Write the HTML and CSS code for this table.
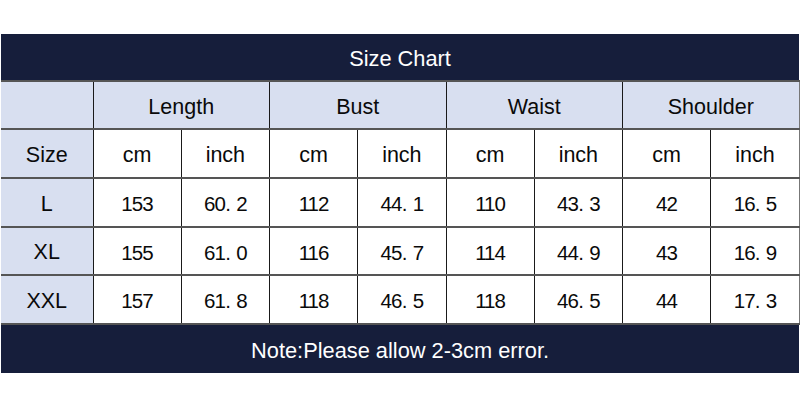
FILE: index.html
```html
<!DOCTYPE html>
<html lang="en">
<head>
<meta charset="utf-8">
<title>Size Chart</title>
<link rel="stylesheet" href="styles.css">
</head>
<body>
<div class="chart">
  <table class="size-table">
    <colgroup>
      <col class="col-size">
      <col span="8" class="col-val">
    </colgroup>
    <tr class="row-title"><td colspan="9">Size Chart</td></tr>
    <tr class="row-group">
      <td class="label"></td>
      <td colspan="2">Length</td>
      <td colspan="2">Bust</td>
      <td colspan="2">Waist</td>
      <td colspan="2">Shoulder</td>
    </tr>
    <tr class="row-unit">
      <td class="label">Size</td>
      <td>cm</td><td>inch</td>
      <td>cm</td><td>inch</td>
      <td>cm</td><td>inch</td>
      <td>cm</td><td>inch</td>
    </tr>
    <tr class="row-data">
      <td class="label">L</td>
      <td class="num">153</td><td class="num">60<span class="dp">.</span>2</td>
      <td class="num">112</td><td class="num">44<span class="dp">.</span>1</td>
      <td class="num">110</td><td class="num">43<span class="dp">.</span>3</td>
      <td class="num">42</td><td class="num">16<span class="dp">.</span>5</td>
    </tr>
    <tr class="row-data">
      <td class="label">XL</td>
      <td class="num">155</td><td class="num">61<span class="dp">.</span>0</td>
      <td class="num">116</td><td class="num">45<span class="dp">.</span>7</td>
      <td class="num">114</td><td class="num">44<span class="dp">.</span>9</td>
      <td class="num">43</td><td class="num">16<span class="dp">.</span>9</td>
    </tr>
    <tr class="row-data">
      <td class="label">XXL</td>
      <td class="num">157</td><td class="num">61<span class="dp">.</span>8</td>
      <td class="num">118</td><td class="num">46<span class="dp">.</span>5</td>
      <td class="num">118</td><td class="num">46<span class="dp">.</span>5</td>
      <td class="num">44</td><td class="num">17<span class="dp">.</span>3</td>
    </tr>
    <tr class="row-note"><td colspan="9">Note:Please allow 2-3cm error.</td></tr>
  </table>
</div>
</body>
</html>
```
FILE: styles.css
```css
html, body {
  margin: 0;
  padding: 0;
  background: #ffffff;
}

.chart {
  padding-top: 34px;
  padding-left: 1px;
  width: 798px;
}

.size-table {
  width: 798px;
  border-collapse: collapse;
  table-layout: fixed;
  font-family: "Liberation Sans", Arial, sans-serif;
  font-size: 21.5px;
  color: #0a0a0a;
}

.col-size { width: 92px; }
.col-val { width: 88.25px; }

.size-table td {
  padding: 4px 0 0 0;
  text-align: center;
  vertical-align: middle;
  background: #ffffff;
  border-left: 1px solid #1a1a1a;
  border-right: 1px solid #1a1a1a;
  border-top: 2px solid #555555;
  border-bottom: 2px solid #555555;
}

.size-table td:first-child { border-left: none; }

.row-title td,
.row-note td {
  background: #161e3b;
  color: #ffffff;
  border: none;
}

.row-title { height: 47px; }
.row-group { height: 48px; }
.row-unit { height: 49px; }
.row-data { height: 48.5px; }
.row-note { height: 49px; }

.row-title td { font-size: 21.8px; }
.row-note td { font-size: 21.8px; }

.row-group td,
.size-table td.label {
  background: #d8dff0;
}

.row-group td:last-child,
.row-unit td:last-child,
.row-data td:last-child {
  border-right: 1px solid #777;
}

.num {
  font-size: 20.5px;
  letter-spacing: -0.9px;
}

.dp {
  display: inline-block;
  width: 11px;
  text-align: left;
  letter-spacing: 0;
}
```
